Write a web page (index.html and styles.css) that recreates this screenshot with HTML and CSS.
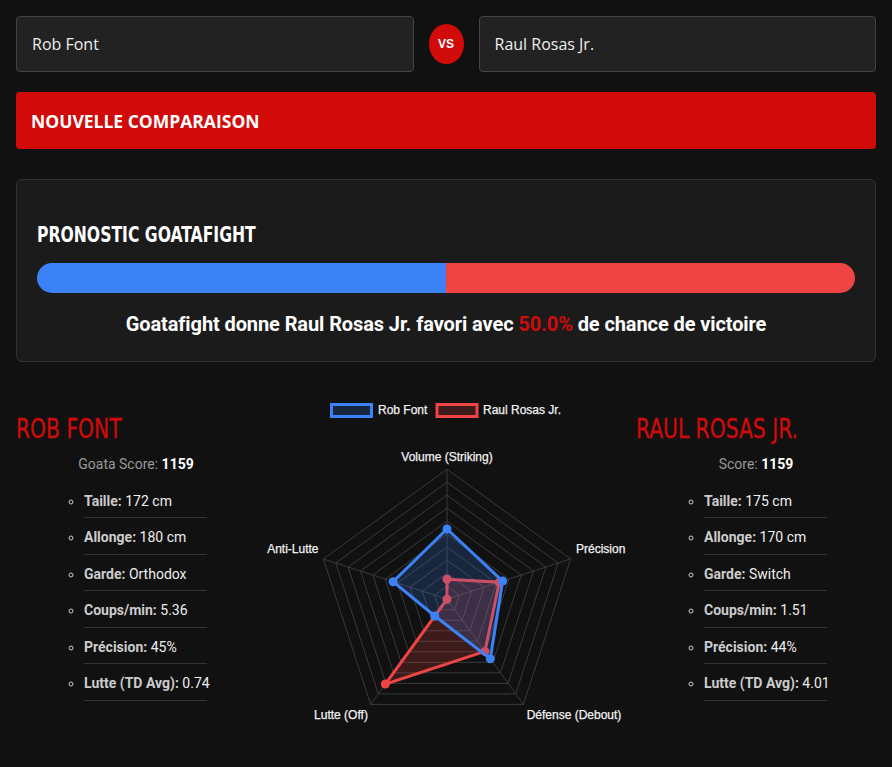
FILE: index.html
```html
<!DOCTYPE html>
<html lang="fr">
<head>
<meta charset="utf-8">
<title>Comparaison</title>
<link rel="stylesheet" href="styles.css">
</head>
<body>
<div class="page">
  <div class="pickers">
    <input class="field" type="text" value="Rob Font">
    <div class="vs">VS</div>
    <input class="field" type="text" value="Raul Rosas Jr.">
  </div>
  <button class="btn-new" type="button">NOUVELLE COMPARAISON</button>

  <section class="card">
    <h3 class="card-title">PRONOSTIC GOATAFIGHT</h3>
    <div class="bar">
      <div class="bar-blue" style="width:50%"></div>
      <div class="bar-red" style="width:50%"></div>
    </div>
    <p class="verdict">Goatafight donne Raul Rosas Jr. favori avec <span class="pct">50.0%</span> de chance de victoire</p>
  </section>

  <section class="compare">
    <div class="fighter">
      <h2 class="fighter-name">ROB FONT</h2>
      <div class="score">Goata Score: <b>1159</b></div>
      <ul class="stats">
        <li><strong>Taille:</strong> 172 cm</li>
        <li><strong>Allonge:</strong> 180 cm</li>
        <li><strong>Garde:</strong> Orthodox</li>
        <li><strong>Coups/min:</strong> 5.36</li>
        <li><strong>Précision:</strong> 45%</li>
        <li><strong>Lutte (TD Avg):</strong> 0.74</li>
      </ul>
    </div>

    <div class="chart">
      <svg class="radar" width="380" height="340" viewBox="0 0 380 340" xmlns="http://www.w3.org/2000/svg">
        <g class="legend">
          <rect x="75.5" y="12.5" width="40" height="12" fill="rgba(59,130,246,0.2)" stroke="#3b82f6" stroke-width="3"/>
          <text x="122" y="22">Rob Font</text>
          <rect x="181" y="12.5" width="40" height="12" fill="rgba(239,68,68,0.2)" stroke="#ef4444" stroke-width="3"/>
          <text x="227" y="22">Raul Rosas Jr.</text>
        </g>
        <g transform="translate(191 207.2)">
          <g class="grid" fill="none" stroke="#3a3a3a" stroke-width="1">
            <polygon vector-effect="non-scaling-stroke" transform="scale(0.1)" points="0,-130 123.6,-40.2 76.4,105.2 -76.4,105.2 -123.6,-40.2"/>
            <polygon vector-effect="non-scaling-stroke" transform="scale(0.2)" points="0,-130 123.6,-40.2 76.4,105.2 -76.4,105.2 -123.6,-40.2"/>
            <polygon vector-effect="non-scaling-stroke" transform="scale(0.3)" points="0,-130 123.6,-40.2 76.4,105.2 -76.4,105.2 -123.6,-40.2"/>
            <polygon vector-effect="non-scaling-stroke" transform="scale(0.4)" points="0,-130 123.6,-40.2 76.4,105.2 -76.4,105.2 -123.6,-40.2"/>
            <polygon vector-effect="non-scaling-stroke" transform="scale(0.5)" points="0,-130 123.6,-40.2 76.4,105.2 -76.4,105.2 -123.6,-40.2"/>
            <polygon vector-effect="non-scaling-stroke" transform="scale(0.6)" points="0,-130 123.6,-40.2 76.4,105.2 -76.4,105.2 -123.6,-40.2"/>
            <polygon vector-effect="non-scaling-stroke" transform="scale(0.7)" points="0,-130 123.6,-40.2 76.4,105.2 -76.4,105.2 -123.6,-40.2"/>
            <polygon vector-effect="non-scaling-stroke" transform="scale(0.8)" points="0,-130 123.6,-40.2 76.4,105.2 -76.4,105.2 -123.6,-40.2"/>
            <polygon vector-effect="non-scaling-stroke" transform="scale(0.9)" points="0,-130 123.6,-40.2 76.4,105.2 -76.4,105.2 -123.6,-40.2"/>
            <polygon points="0,-130 123.6,-40.2 76.4,105.2 -76.4,105.2 -123.6,-40.2"/>
            <path d="M0 0V-130M0 0L123.6 -40.2M0 0L76.4 105.2M0 0L-76.4 105.2M0 0L-123.6 -40.2"/>
          </g>
          <g class="series-red">
            <polygon points="0,-19.9 52.3,-17 37.9,52.2 -61.7,84.9 0,0" fill="rgba(239,68,68,0.2)" stroke="#ef4444" stroke-width="3"/>
            <g fill="#ef4444">
              <circle cx="0" cy="-19.9" r="4.5"/>
              <circle cx="52.3" cy="-17" r="4.5"/>
              <circle cx="37.9" cy="52.2" r="4.5"/>
              <circle cx="-61.7" cy="84.9" r="4.5"/>
              <circle cx="0" cy="0" r="4.5"/>
            </g>
          </g>
          <g class="series-blue">
            <polygon points="0,-70.2 55.6,-18.1 43.3,59.6 -12.2,16.8 -53.9,-17.5" fill="rgba(59,130,246,0.2)" stroke="#3b82f6" stroke-width="3"/>
            <g fill="#3b82f6">
              <circle cx="0" cy="-70.2" r="4.5"/>
              <circle cx="55.6" cy="-18.1" r="4.5"/>
              <circle cx="43.3" cy="59.6" r="4.5"/>
              <circle cx="-12.2" cy="16.8" r="4.5"/>
              <circle cx="-53.9" cy="-17.5" r="4.5"/>
            </g>
          </g>
        </g>
        <g class="axis-labels">
          <text x="191" y="68.5" text-anchor="middle">Volume (Striking)</text>
          <text x="320" y="161" text-anchor="start">Précision</text>
          <text x="318" y="326.5" text-anchor="middle">Défense (Debout)</text>
          <text x="85" y="326.5" text-anchor="middle">Lutte (Off)</text>
          <text x="62.5" y="161" text-anchor="end">Anti-Lutte</text>
        </g>
      </svg>
    </div>

    <div class="fighter">
      <h2 class="fighter-name">RAUL ROSAS JR.</h2>
      <div class="score">Score: <b>1159</b></div>
      <ul class="stats">
        <li><strong>Taille:</strong> 175 cm</li>
        <li><strong>Allonge:</strong> 170 cm</li>
        <li><strong>Garde:</strong> Switch</li>
        <li><strong>Coups/min:</strong> 1.51</li>
        <li><strong>Précision:</strong> 44%</li>
        <li><strong>Lutte (TD Avg):</strong> 4.01</li>
      </ul>
    </div>
  </section>
</div>
</body>
</html>
```

FILE: styles.css
```css
* { box-sizing: border-box; }

html, body {
  margin: 0;
  padding: 0;
  background: #111111;
  color: #eeeeee;
  font-family: Roboto, "Liberation Sans", Arial, sans-serif;
}

.page {
  padding: 16px;
}

.pickers {
  display: flex;
  align-items: center;
  gap: 15px;
}

.field {
  flex: 1 1 0;
  min-width: 0;
  height: 56px;
  margin: 0;
  padding: 0 15px;
  background: #222222;
  border: 1px solid #444444;
  border-radius: 4px;
  color: #eeeeee;
  font-family: "Open Sans", "Noto Sans", sans-serif;
  font-size: 16px;
  outline: none;
}

.vs {
  flex: 0 0 35px;
  width: 35px;
  height: 40px;
  border-radius: 50%;
  background: #d10a0a;
  color: #ffffff;
  display: flex;
  align-items: center;
  justify-content: center;
  font-family: "Liberation Sans", Arial, sans-serif;
  font-weight: 700;
  font-size: 12px;
}

.btn-new {
  display: block;
  width: 100%;
  height: 57px;
  margin-top: 20px;
  padding: 0 15px;
  border: none;
  border-radius: 4px;
  background: #d10a0a;
  color: #ffffff;
  text-align: left;
  font-family: "Open Sans", "Noto Sans", sans-serif;
  font-weight: 700;
  font-size: 17.5px;
}

.card {
  margin-top: 30px;
  padding: 20px;
  background: #1b1b1b;
  border: 1px solid #333333;
  border-radius: 6px;
}

.card-title {
  margin: 22px 0 15px;
  font-family: "DejaVu Sans Condensed", "DejaVu Sans", sans-serif;
  font-weight: 700;
  font-size: 22px;
  line-height: 1.2;
  color: #ffffff;
  transform: scaleX(0.79);
  transform-origin: left center;
  white-space: nowrap;
}

.bar {
  display: flex;
  height: 30px;
  border-radius: 15px;
  overflow: hidden;
}

.bar-blue { background: #3b82f6; }
.bar-red { background: #ef4444; }

.verdict {
  margin: 20px 0 5px;
  text-align: center;
  font-family: Roboto, "Liberation Sans", sans-serif;
  font-weight: 700;
  font-size: 20px;
  line-height: 23px;
  letter-spacing: -0.1px;
  color: #ffffff;
}

.pct { color: #d10a0a; }

.compare {
  margin-top: 30px;
  display: grid;
  grid-template-columns: 240px 1fr 240px;
}

.fighter-name {
  margin: 22px 0 0;
  font-family: "DejaVu Sans Condensed", "DejaVu Sans", sans-serif;
  font-weight: 400;
  font-size: 26px;
  line-height: 1.2;
  color: #d10a0a;
  transform: scaleX(0.867);
  transform-origin: left center;
  white-space: nowrap;
  -webkit-text-stroke: 0.3px #d10a0a;
}

.score {
  margin-top: 8px;
  text-align: center;
  font-size: 14px;
  line-height: 20px;
  color: #999999;
}

.score b {
  color: #ffffff;
  font-weight: 700;
}

.stats {
  width: 123px;
  margin: 8px 0 0 28px;
  padding: 0 0 0 40px;
  list-style: circle;
  box-sizing: content-box;
  color: #cccccc;
}

.stats li {
  padding: 11px 0 8px;
  line-height: 16.5px;
  font-size: 14px;
  color: #eeeeee;
  border-bottom: 1px solid #333333;
  white-space: nowrap;
}

.stats li::marker { color: #cccccc; }

.stats strong {
  color: #cccccc;
  font-weight: 700;
}

.chart {
  display: flex;
  justify-content: center;
}

.radar {
  display: block;
}

.radar text {
  font-family: "Liberation Sans", Arial, sans-serif;
  font-size: 12px;
  fill: #f2f2f2;
  stroke: #f2f2f2;
  stroke-width: 0.25px;
}
```
